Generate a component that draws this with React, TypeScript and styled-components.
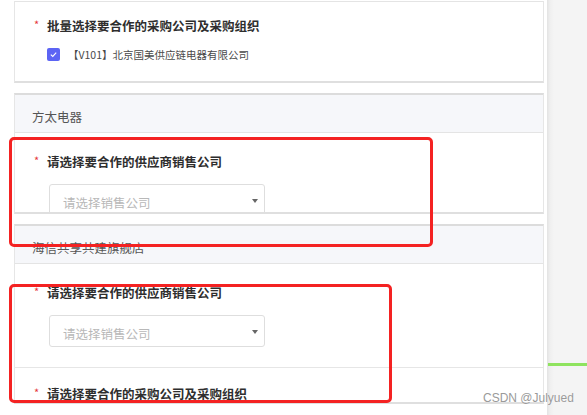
import React from 'react';
import styled, { createGlobalStyle } from 'styled-components';

const GlobalStyle = createGlobalStyle`
  html, body { margin: 0; padding: 0; background: #fff; }
  body { font-family: "Noto Sans CJK SC", "Noto Sans", sans-serif; }
  * { box-sizing: border-box; }
`;

interface SectionData {
  title: string;
  bodyHeight?: number;
  items: { label: string; select?: boolean; divided?: boolean }[];
}

const sections: SectionData[] = [
  {
    title: '方太电器',
    bodyHeight: 79,
    items: [{ label: '请选择要合作的供应商销售公司', select: true }],
  },
  {
    title: '海信共享共建旗舰店',
    items: [
      { label: '请选择要合作的供应商销售公司', select: true },
      { label: '请选择要合作的采购公司及采购组织', divided: true },
    ],
  },
];

const Marks = [
  { left: 9, top: 137, width: 424, height: 110 },
  { left: 9, top: 284, width: 383, height: 119 },
];

const App: React.FC = () => (
  <>
    <GlobalStyle />
    <Page>
      <Main>
        <Card>
          <FormItem>
            <Label>
              <Star>*</Star>批量选择要合作的采购公司及采购组织
            </Label>
            <CheckRow>
              <CheckBox>
                <svg width="9" height="9" viewBox="0 0 10 10">
                  <polyline points="2,5.2 4.2,7.2 8,3" fill="none" stroke="#fff" strokeWidth="1.2" />
                </svg>
              </CheckBox>
              <CheckText>【V101】北京国美供应链电器有限公司</CheckText>
            </CheckRow>
          </FormItem>
        </Card>

        {sections.map((s) => (
          <Card key={s.title} $headed>
            <Header>{s.title}</Header>
            <Body $height={s.bodyHeight}>
              {s.items.map((item, i) => (
                <FormItem key={i} $divided={item.divided}>
                  <Label>
                    <Star>*</Star>
                    {item.label}
                  </Label>
                  {item.select && (
                    <Select>
                      <Placeholder>请选择销售公司</Placeholder>
                      <Caret />
                    </Select>
                  )}
                </FormItem>
              ))}
            </Body>
          </Card>
        ))}
      </Main>

      <SideStrip>
        <GreenBar />
      </SideStrip>

      {Marks.map((m, i) => (
        <RedMark key={i} style={{ left: m.left, top: m.top, width: m.width, height: m.height }} />
      ))}
      <Watermark>CSDN @Julyued</Watermark>
    </Page>
  </>
);

export default App;

const Page = styled.div`
  position: relative;
  display: flex;
  width: 587px;
  height: 415px;
  overflow: hidden;
  background: #fff;
`;

const Main = styled.div`
  width: 547px;
  padding: 1px 3px 0 14px;
  display: flex;
  flex-direction: column;
  gap: 10px;
  background: #fff;
`;

const SideStrip = styled.div`
  flex: 1;
  padding-top: 363px;
  background: linear-gradient(to right, #e3e3e3 0, #efefef 3px, #f4f4f4 7px, #f4f4f4 100%);
`;

const GreenBar = styled.div`
  height: 3px;
  margin-left: 1px;
  background: #8fe35f;
`;

const Card = styled.section<{ $headed?: boolean }>`
  flex-shrink: 0;
  background: #fff;
  border: 1px solid #e6e6e6;
  border-top: ${({ $headed }) => ($headed ? '2px solid #dcdcdc' : '1px solid #e4e4e4')};
  border-bottom: 2px solid #dfdfdf;
`;

const Header = styled.div`
  height: 38px;
  display: flex;
  align-items: center;
  padding: 6px 0 0 17px;
  background: #f6f7fa;
  border-bottom: 1px solid #e4e4e4;
  color: #555;
  font-size: 12.5px;
`;

const Body = styled.div<{ $height?: number }>`
  height: ${({ $height }) => ($height ? `${$height}px` : 'auto')};
  overflow: hidden;
`;

const FormItem = styled.div<{ $divided?: boolean }>`
  display: flex;
  flex-direction: column;
  align-items: flex-start;
  padding: ${({ $divided }) => ($divided ? '16px 0 0 18px' : '14px 0 18px 18px')};
  border-top: ${({ $divided }) => ($divided ? '1px solid #e6e6e6' : 'none')};

  section > div > &:first-child {
    padding-top: 19px;
    padding-bottom: 20px;
  }
`;

const Label = styled.div`
  display: flex;
  align-items: center;
  height: 18px;
  color: #2e2e2e;
  font-size: 12.5px;
  font-weight: 700;
`;

const Star = styled.span`
  width: 14px;
  margin-top: -3px;
  padding-left: 1px;
  color: #e5373b;
  font-size: 11px;
  font-weight: 400;
`;

const CheckRow = styled.div`
  display: flex;
  align-items: center;
  gap: 8px;
  margin: 11px 0 0 14px;
  height: 18px;
`;

const CheckBox = styled.span`
  width: 13px;
  height: 13px;
  border-radius: 2px;
  background: #5c64f4;
  display: flex;
  align-items: center;
  justify-content: center;
`;

const CheckText = styled.span`
  color: #4a4a4a;
  font-size: 10.5px;
`;

const Select = styled.div`
  position: relative;
  width: 216px;
  height: 32px;
  margin: 14px 0 0 16px;
  display: flex;
  align-items: center;
  padding: 5px 0 0 13px;
  border: 1px solid #dedede;
  border-radius: 3px;
  background: #fff;
`;

const Placeholder = styled.span`
  color: #b8b8b8;
  font-size: 12.5px;
`;

const Caret = styled.span`
  position: absolute;
  right: 6px;
  top: 14px;
  border-left: 3.5px solid transparent;
  border-right: 3.5px solid transparent;
  border-top: 4px solid #666;
`;

const RedMark = styled.div`
  position: absolute;
  border: 3px solid #f42222;
  border-radius: 5px;
  pointer-events: none;
`;

const Watermark = styled.div`
  position: absolute;
  left: 483px;
  top: 391px;
  color: #9a9a9a;
  font-family: "Liberation Sans", Arial, sans-serif;
  font-size: 12px;
  text-shadow: 0 0 1px #fff;
`;
